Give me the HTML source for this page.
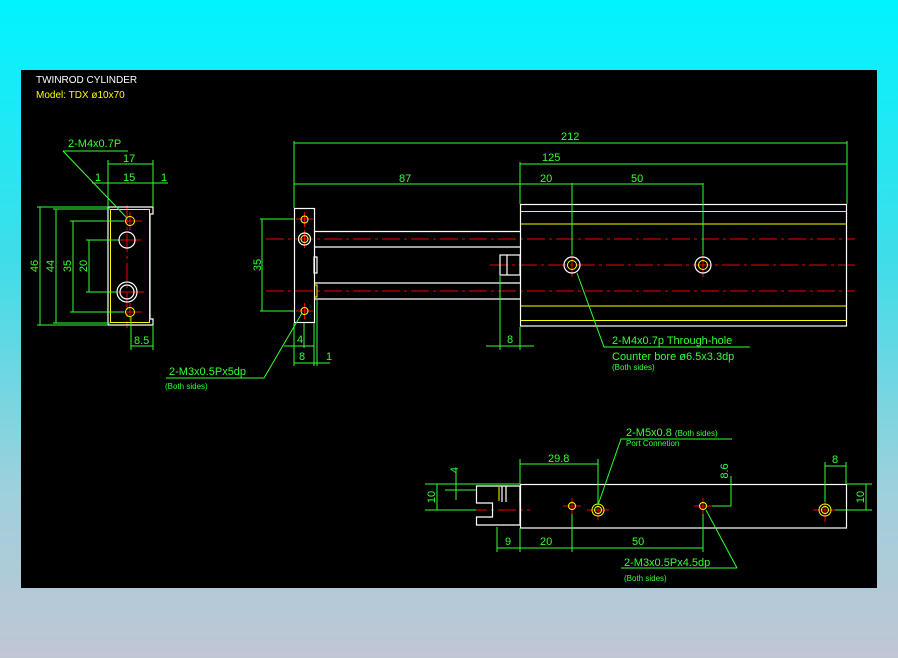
<!DOCTYPE html>
<html><head><meta charset="utf-8"><style>
html,body{margin:0;padding:0;}
body{width:898px;height:658px;overflow:hidden;background:linear-gradient(to bottom,#00f4ff 0%,#40dde8 40%,#9fd0dc 75%,#c0c6d4 100%);}
svg{position:absolute;left:0;top:0;}
text{font-family:"Liberation Sans",sans-serif;font-size:11px;fill:#3f3;}
.s{font-size:8px;}
</style></head><body>
<svg width="898" height="658" viewBox="0 0 898 658">
<rect x="21" y="70" width="856" height="518" fill="#000"/>
<text x="36" y="83" style="fill:#fff;font-size:10px">TWINROD CYLINDER</text>
<text x="36" y="98" style="fill:#ff0;font-size:10px">Model: TDX ø10x70</text>

<!-- red centerlines -->
<g stroke="#e00" stroke-width="1" stroke-dasharray="18,4,3,4" fill="none">
<line x1="266" y1="239" x2="855" y2="239"/>
<line x1="266" y1="291" x2="855" y2="291"/>
<line x1="490" y1="265" x2="855" y2="265"/>
<line x1="469" y1="510" x2="530" y2="510"/>
<line x1="127" y1="205" x2="127" y2="328"/>
</g>
<g stroke="#e00" stroke-width="1">
<line x1="118" y1="221" x2="142" y2="221"/><line x1="130" y1="212" x2="130" y2="230"/>
<line x1="113" y1="240" x2="141" y2="240"/>
<line x1="110" y1="292" x2="144" y2="292"/>
<line x1="118" y1="312" x2="142" y2="312"/><line x1="130" y1="303" x2="130" y2="321"/>
<line x1="296" y1="219" x2="313" y2="219"/><line x1="304.5" y1="212" x2="304.5" y2="227"/>
<line x1="304.5" y1="230" x2="304.5" y2="248"/>
<line x1="296" y1="311" x2="313" y2="311"/><line x1="304.5" y1="303" x2="304.5" y2="319"/>
<line x1="572" y1="253" x2="572" y2="277"/><line x1="703" y1="253" x2="703" y2="277"/>
<line x1="563" y1="506" x2="581" y2="506"/><line x1="572" y1="498" x2="572" y2="514"/>
<line x1="587" y1="510" x2="609" y2="510"/><line x1="598" y1="499" x2="598" y2="520"/>
<line x1="694" y1="506" x2="712" y2="506"/><line x1="703" y1="498" x2="703" y2="514"/>
<line x1="813" y1="510" x2="837" y2="510"/><line x1="825" y1="498" x2="825" y2="522"/>
</g>

<!-- white outlines -->
<g stroke="#fff" stroke-width="1.2" fill="none">
<path d="M108 207H153V214H150V319H153V325H108Z"/>
<circle cx="127" cy="240" r="8"/>
<circle cx="127" cy="292" r="10"/><circle cx="127" cy="292" r="7"/>
<rect x="294.5" y="208.5" width="20" height="114"/>
<rect x="314" y="257" width="3" height="16"/>
<path d="M314 231.5H521M314 247H521M314 283H521M314 299H521"/>
<rect x="520.5" y="204.5" width="326" height="121.5"/>
<rect x="500" y="255" width="20" height="20"/>
<line x1="507" y1="255" x2="507" y2="275"/>
<circle cx="304.5" cy="239" r="6"/>
<circle cx="572" cy="265" r="8"/><circle cx="703" cy="265" r="8"/>
<rect x="520.5" y="484.5" width="326" height="43.5"/>
<path d="M476.5 486H520V525H476.5V517H492.5V503H476.5Z"/>
<path d="M502 486V502M506 486V502M520 486V502"/>
</g>

<!-- yellow -->
<g stroke="#ff0" stroke-width="1" fill="none">
<rect x="110.5" y="209.5" width="39" height="113"/>
<circle cx="130" cy="221" r="4.5"/><circle cx="130" cy="312" r="4.5"/>
<circle cx="304.5" cy="219.5" r="3.5"/><circle cx="304.5" cy="239" r="3.5"/><circle cx="304.5" cy="311" r="3.5"/>
<path d="M314 285H317V297H314"/>
<path d="M521 211.5H846M521 224H846M521 306H846M521 320.5H846"/>
<circle cx="572" cy="265" r="4.5"/><circle cx="703" cy="265" r="4.5"/>
<circle cx="572" cy="506" r="3.5"/><circle cx="703" cy="506" r="3.5"/>
<circle cx="598" cy="510" r="6"/><circle cx="598" cy="510" r="3.5"/>
<circle cx="825" cy="510" r="6"/><circle cx="825" cy="510" r="3.5"/>
<line x1="499" y1="487" x2="499" y2="501"/>
</g>

<!-- green dims -->
<g stroke="#3f3" stroke-width="1" fill="none">
<!-- side view -->
<path d="M108 160V207M153 160V207M92 183H168M108 164H153"/>
<path d="M37 207H108M53 209H110M70 221H124M86 240H119M86 292H117M70 312H124"/>
<path d="M40 207V325M56 209V323M73 221V312M89 240V292M37 325H108M53 323H110"/>
<path d="M131 316V350M153 326V350M131 346H153"/>
<path d="M63 151H128M63 151L127 218"/>
<!-- main view -->
<path d="M294 141V208M520 162V204M847 141V204M572 183V255M703 183V255"/>
<path d="M294 143H847M520 164H847M294 184H703"/>
<path d="M260 219H294M260 311H294M262 219V311"/>
<path d="M294 323V366M314 323V366M304 323V348M317 300V366M284 346H314M294 363H330"/>
<path d="M500 276V350M520 327V350M486 346H534"/>
<path d="M166 378H264L302 313"/>
<path d="M577 273L604 347H750"/>
<!-- bottom -->
<path d="M520 459V484M598 459V505M520 464H598"/>
<path d="M497 527V552M520 528V552M572 514V552M703 514V552M497 548H703"/>
<path d="M425 484H520M425 510H476M437 484V510M445 490H476M456 470V500M456 484V490"/>
<path d="M731 476V506M712 506H731"/>
<path d="M825 462V502M846 462V484M825 466H846"/>
<path d="M847 484H872M835 510H872M866 484V510"/>
<path d="M732 439H621L598 505"/>
<path d="M737 568H621M737 568L706 510"/>
</g>

<!-- texts -->
<text x="68" y="147">2-M4x0.7P</text>
<text x="123" y="162">17</text>
<text x="95" y="181" class="">1</text>
<text x="123" y="181">15</text>
<text x="161" y="181">1</text>
<text x="134" y="344">8.5</text>
<text transform="translate(38,266) rotate(-90)" text-anchor="middle">46</text>
<text transform="translate(54,266) rotate(-90)" text-anchor="middle">44</text>
<text transform="translate(71,266) rotate(-90)" text-anchor="middle">35</text>
<text transform="translate(87,266) rotate(-90)" text-anchor="middle">20</text>
<text x="169" y="375">2-M3x0.5Px5dp</text>
<text x="165" y="389" class="s">(Both sides)</text>

<text x="561" y="140">212</text>
<text x="542" y="161">125</text>
<text x="399" y="182">87</text>
<text x="540" y="182">20</text>
<text x="631" y="182">50</text>
<text transform="translate(261,265) rotate(-90)" text-anchor="middle">35</text>
<text x="297" y="343">4</text>
<text x="299" y="360">8</text>
<text x="326" y="360">1</text>
<text x="507" y="343">8</text>
<text x="612" y="344">2-M4x0.7p Through-hole</text>
<text x="612" y="360">Counter bore ø6.5x3.3dp</text>
<text x="612" y="370" class="s">(Both sides)</text>

<text x="626" y="436">2-M5x0.8 <tspan class="s">(Both sides)</tspan></text>
<text x="626" y="446" class="s">Port Connetion</text>
<text x="548" y="462">29.8</text>
<text x="832" y="463">8</text>
<text transform="translate(458,470) rotate(-90)" text-anchor="middle">4</text>
<text transform="translate(435,497) rotate(-90)" text-anchor="middle">10</text>
<text transform="translate(728,471) rotate(-90)" text-anchor="middle">8.6</text>
<text transform="translate(864,497) rotate(-90)" text-anchor="middle">10</text>
<text x="505" y="545">9</text>
<text x="540" y="545">20</text>
<text x="632" y="545">50</text>
<text x="624" y="566">2-M3x0.5Px4.5dp</text>
<text x="624" y="581" class="s">(Both sides)</text>
</svg>
</body></html>
